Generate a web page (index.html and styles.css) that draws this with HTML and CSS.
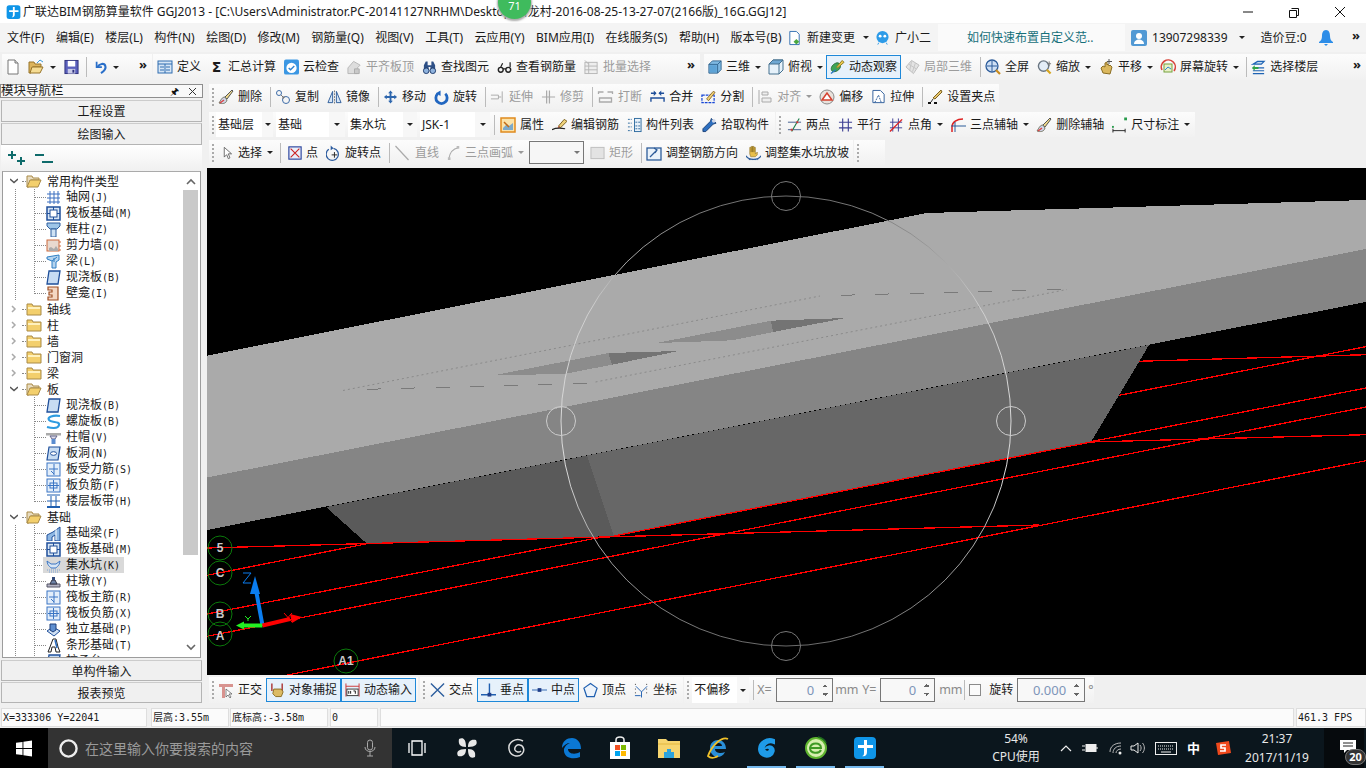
FILE: index.html
```html
<!DOCTYPE html>
<html lang="zh">
<head>
<meta charset="utf-8">
<title>广联达BIM钢筋算量软件 GGJ2013</title>
<link rel="stylesheet" href="styles.css">
</head>
<body>
<svg class="sprite" xmlns="http://www.w3.org/2000/svg">
<symbol id="new" viewBox="0 0 16 16"><path d="M3 1h7l3 3v11H3z" fill="#fff" stroke="#777"/><path d="M10 1v3h3" fill="#ddd" stroke="#777"/></symbol>
<symbol id="open" viewBox="0 0 16 16"><path d="M1 3h5l1 2h6v3H5l-2 6H1z" fill="#dcb45c" stroke="#97742a"/><path d="M4 8h11l-3 6H2z" fill="#f5dc93" stroke="#97742a"/><path d="M9 4l3-3 3 2" fill="none" stroke="#3a9ad9"/></symbol>
<symbol id="save" viewBox="0 0 16 16"><rect x="1" y="1" width="14" height="14" fill="#5b60bd" stroke="#2c2f7a"/><rect x="4" y="1.500" width="8" height="6" fill="#fff"/><rect x="4" y="10" width="8" height="5" fill="#c9cbe8"/><rect x="9" y="11" width="2" height="3" fill="#2c2f7a"/></symbol>
<symbol id="undo" viewBox="0 0 16 16"><path d="M3 2v6h6" fill="none" stroke="#2a6fc9" stroke-width="2"/><path d="M4 8c2-4 8-5 9-1 1 3-2 6-5 8" fill="none" stroke="#2a6fc9" stroke-width="2.400"/></symbol>
<symbol id="def" viewBox="0 0 16 16"><rect x="1" y="2" width="14" height="12" fill="#d6e6f6" stroke="#2f6db0"/><path d="M1 5h14M3 8h4M3 11h4M9 8h4M9 11h4M8 5v9" stroke="#2f6db0" fill="none"/></symbol>
<symbol id="cloud" viewBox="0 0 16 16"><rect x="0" y="0" width="16" height="16" rx="2" fill="#3b97e3"/><circle cx="8" cy="9" r="5.500" fill="#fff"/><path d="M5 9l2 2 4-4" fill="none" stroke="#2f84d0" stroke-width="1.500"/></symbol>
<symbol id="flat" viewBox="0 0 16 16"><path d="M1 15V9l6-7 7 4-3 3v6z" fill="#ddd" stroke="#b5b5b5"/><path d="M8 10h5v5H8z" fill="#c9c9c9" stroke="#aaa"/></symbol>
<symbol id="find" viewBox="0 0 16 16"><path d="M2 6l2-4h2v4h4V2h2l2 4v6H9V8H7v4H2z" fill="#2d4f86"/><circle cx="4.500" cy="12" r="3" fill="#8fb3de" stroke="#1f3b6b"/><circle cx="11.500" cy="12" r="3" fill="#8fb3de" stroke="#1f3b6b"/></symbol>
<symbol id="glass" viewBox="0 0 16 16"><circle cx="4" cy="11" r="2.600" fill="none" stroke="#222" stroke-width="1.500"/><circle cx="12" cy="11" r="2.600" fill="none" stroke="#222" stroke-width="1.500"/><path d="M6.500 10h3M4 8l2-4M14 8V3" fill="none" stroke="#222" stroke-width="1.300"/></symbol>
<symbol id="batch" viewBox="0 0 16 16"><rect x="1" y="3" width="13" height="12" fill="#eee" stroke="#b5b5b5"/><path d="M1 7h13M1 11h13M5 3v12M1 1l4 4" stroke="#b5b5b5" fill="none"/></symbol>
<symbol id="cube" viewBox="0 0 16 16"><path d="M1 5l4-4h10v10l-4 4H1z" fill="#7fb9e2" stroke="#2a5f8a"/><path d="M1 5h10v10M11 5l4-4" fill="none" stroke="#2a5f8a"/><path d="M2 6h8v8H2z" fill="#5da3d6"/></symbol>
<symbol id="top" viewBox="0 0 16 16"><path d="M1 5l4-4h10v10l-4 4H1z" fill="#e5f1fa" stroke="#44708f"/><path d="M1 5l4-4h10l-4 4z" fill="#6ea8d4" stroke="#44708f"/><path d="M11 5v10M11 5l4-4" fill="none" stroke="#44708f"/></symbol>
<symbol id="orbit" viewBox="0 0 16 16"><path d="M6 4c4-2 7 3 4 6-2 3-7 4-8 2-2-3 1-7 4-8z" fill="#3ea457" stroke="#256b38"/><path d="M7 8l6-7 2 2-7 6z" fill="#e9c94e" stroke="#8d7a22"/><path d="M1 15l5-4" stroke="#2b78c4" stroke-width="1.500"/></symbol>
<symbol id="local" viewBox="0 0 16 16"><path d="M1 8l6-7 8 5-6 9z" fill="#e3e3e3" stroke="#bbb"/><path d="M4 5l8 5M7 2l-2 10M11 4l-3 9" stroke="#c4c4c4" fill="none"/></symbol>
<symbol id="full" viewBox="0 0 16 16"><circle cx="7" cy="7" r="6" fill="#cfe0f5" stroke="#2d5c9a" stroke-width="1.300"/><path d="M7 2v10M2 7h10" stroke="#2d5c9a"/><path d="M11 11l4 4" stroke="#c88b1e" stroke-width="2.200"/></symbol>
<symbol id="zoomi" viewBox="0 0 16 16"><circle cx="7" cy="7" r="5.500" fill="#e4edf7" stroke="#6a7682" stroke-width="1.500"/><path d="M10.500 11l4 4" stroke="#d6a51f" stroke-width="2.400"/><path d="M13 2v5M11 4.500h4" stroke="#777" fill="none"/></symbol>
<symbol id="pan" viewBox="0 0 16 16"><path d="M3 9l2 5 7 1 2-7-2-2-1 1-1-2-1 1V3L7 4v4L5 7z" fill="#dbb85e" stroke="#8a6d22"/><path d="M11 0v5M9 2.500h5" stroke="#555" fill="none"/></symbol>
<symbol id="rot" viewBox="0 0 16 16"><path d="M2 11A7 7 0 1 1 14 12" fill="none" stroke="#d8453b" stroke-width="1.600"/><rect x="4" y="5" width="8" height="8" fill="#e9f0c8" stroke="#74a23c"/><path d="M5 11l3-3 3 2" stroke="#2d86d6" fill="none"/></symbol>
<symbol id="floor" viewBox="0 0 16 16"><path d="M2 5l5-3h7l-3 3zM2 9h12M2 12h12M2 15h12" fill="#c5dcf1" stroke="#1f64b4" stroke-width="1.300"/><path d="M1 9l3-3v2h4v2H4v2z" fill="#2fa246"/></symbol>
<symbol id="del" viewBox="0 0 16 16"><path d="M14 1l1 1-6 8-2-2z" fill="#f0d98a" stroke="#555"/><path d="M7 8c-3 0-4 3-6 6 3 1 7 1 8-3z" fill="#cfd6ea" stroke="#776"/><path d="M2 14l4-3" stroke="#d44" stroke-width="1.500"/></symbol>
<symbol id="copy" viewBox="0 0 16 16"><circle cx="4" cy="4" r="2.500" fill="none" stroke="#3f6da8"/><circle cx="11" cy="11" r="3.500" fill="none" stroke="#3f6da8"/><path d="M6 6l3 3M9 7v2H7" stroke="#777" fill="none"/></symbol>
<symbol id="mirror" viewBox="0 0 16 16"><path d="M1 14L6 2v12zM15 14L10 2v12z" fill="#d8e6f5" stroke="#2d5c9a"/><path d="M8 1v14" stroke="#777" stroke-dasharray="2 1"/></symbol>
<symbol id="move" viewBox="0 0 16 16"><path d="M8 1l2.500 3H9v3h3V5.500L15 8l-3 2.500V9H9v3h1.500L8 15l-2.500-3H7V9H4v1.500L1 8l3-2.500V7h3V4H5.500z" fill="#2e66ad"/></symbol>
<symbol id="rotate" viewBox="0 0 16 16"><path d="M4 4.500a6 6 0 1 0 8 0" fill="none" stroke="#2166c0" stroke-width="3"/><path d="M7 1v6l-5-3z" fill="#2166c0"/></symbol>
<symbol id="ext" viewBox="0 0 16 16"><path d="M1 6h8v4H1M9 8h3M13 2v12" fill="none" stroke="#aaa"/></symbol>
<symbol id="trim" viewBox="0 0 16 16"><path d="M6 1v14M9 1v14M1 8h14" fill="none" stroke="#aaa" stroke-width="1.300"/></symbol>
<symbol id="brk" viewBox="0 0 16 16"><path d="M1 5V3h5M15 5V3h-5M2 9h12v4H2z" fill="none" stroke="#aaa" stroke-width="1.300"/></symbol>
<symbol id="merge" viewBox="0 0 16 16"><path d="M1 4h5M15 4h-5M1 13V9h14v4" fill="none" stroke="#1f4f9a" stroke-width="1.500"/><path d="M7 4L4 1v6zM9 4l3-3v6z" fill="#1f4f9a"/></symbol>
<symbol id="split" viewBox="0 0 16 16"><rect x="1" y="6" width="13" height="8" fill="none" stroke="#1646d6" stroke-width="1.300" stroke-dasharray="3 1"/><path d="M6 10l7-8 2 1-7 9z" fill="#efd27b" stroke="#8d6a22"/></symbol>
<symbol id="align" viewBox="0 0 16 16"><path d="M2 1v14M5 3h6v3H5zM5 9h9v4H5z" fill="#eee" stroke="#aaa"/></symbol>
<symbol id="offs" viewBox="0 0 16 16"><circle cx="8" cy="8" r="7" fill="#e9e2dc" stroke="#8a8a8a"/><path d="M3 11l5-7 5 7z" fill="#fff" stroke="#d4412f" stroke-width="1.500"/></symbol>
<symbol id="stretch" viewBox="0 0 16 16"><path d="M2 1h8l4 4v9H2z" fill="#fff" stroke="#2d5c9a"/><path d="M4 14l4-8 3 8" fill="none" stroke="#2d5c9a" stroke-dasharray="2 1"/></symbol>
<symbol id="grip" viewBox="0 0 16 16"><path d="M14 1l1 2-7 7-2-1z" fill="#e7c66d" stroke="#7d6220"/><path d="M1 14h3M7 14h3" stroke="#111" stroke-width="2"/><path d="M6 10l-2 3" stroke="#333"/></symbol>
<symbol id="prop" viewBox="0 0 16 16"><rect x="1" y="1" width="14" height="14" fill="#fbe2a8" stroke="#e08a1e" stroke-width="1.500"/><path d="M3 11l4-4 2 2 4-3v7H3z" fill="#7ca9c9"/><path d="M4 5l5 5" stroke="#c26a15" stroke-width="1.500"/></symbol>
<symbol id="edit" viewBox="0 0 16 16"><path d="M7 9l6-7 3 2-7 7z" fill="#efd27b" stroke="#7a5f1d"/><path d="M7 9l-1 2 3 0z" fill="#c42"/><path d="M0 13c4-2 8-2 14-1" fill="none" stroke="#222" stroke-width="1.300"/></symbol>
<symbol id="list" viewBox="0 0 16 16"><rect x="8" y="1" width="7" height="14" fill="#eaf2fa" stroke="#2d6a9e"/><path d="M1 2h4M1 6h4M1 10h4M1 14h4M9 5h5M9 9h5M9 12h5" stroke="#2d6a9e" stroke-dasharray="2 1" fill="none"/></symbol>
<symbol id="pick" viewBox="0 0 16 16"><path d="M10 1l5 5-3 1-8 8-3 0 0-3 8-8z" fill="#2d6fc0" stroke="#193f75"/><circle cx="12.500" cy="3.500" r="2" fill="#cfd6e6"/></symbol>
<symbol id="two" viewBox="0 0 16 16"><path d="M1 13h14M1 5h14" stroke="#3e5a8c" fill="none"/><path d="M5 15l8-14" stroke="#1d7d4a" stroke-width="1.200"/><path d="M4 13h2M10 5h2" stroke="#d33" stroke-width="2"/></symbol>
<symbol id="para" viewBox="0 0 16 16"><path d="M1 5h14M1 11h14M5 1v14M11 1v14" stroke="#3d3f93" stroke-width="1.200" fill="none"/></symbol>
<symbol id="angle" viewBox="0 0 16 16"><path d="M1 5h13M1 11h13M4 1v14M10 1v14" stroke="#3d3f93" fill="none"/><path d="M1 15L14 2" stroke="#d22" stroke-width="1.500"/></symbol>
<symbol id="arc3" viewBox="0 0 16 16"><path d="M2 15V10c0-5 5-8 11-8" fill="none" stroke="#d22" stroke-width="1.500"/><path d="M1 9h15M5 5v10" stroke="#2d5c9a" fill="none"/></symbol>
<symbol id="dim" viewBox="0 0 16 16"><rect x="0" y="9" width="2" height="2" fill="#2a9c4d"/><rect x="13" y="0" width="3" height="3" fill="#2a9c4d"/><path d="M1 12v4M14 12v4M1 14h13" stroke="#222" fill="none"/></symbol>
<symbol id="sel" viewBox="0 0 16 16"><path d="M4 1v12l3-3 2 5 2-1-2-5h4z" fill="#fff" stroke="#555"/></symbol>
<symbol id="pt" viewBox="0 0 16 16"><rect x="1" y="1" width="14" height="14" fill="#e9eefa" stroke="#27419c" stroke-width="1.300"/><path d="M3 3l10 10M13 3L3 13" stroke="#c22" stroke-width="1.300"/></symbol>
<symbol id="rotpt" viewBox="0 0 16 16"><path d="M3 4a6.500 6.500 0 1 0 5-1" fill="none" stroke="#2a5a9e" stroke-width="1.300"/><path d="M5 0l3 3-3 2z" fill="#2a5a9e"/><path d="M9 7v6M6 10h6" stroke="#222"/></symbol>
<symbol id="line" viewBox="0 0 16 16"><path d="M1 1l13 14" stroke="#aaa" stroke-width="1.200"/></symbol>
<symbol id="arc" viewBox="0 0 16 16"><path d="M2 15C3 8 7 3 13 2" fill="none" stroke="#aaa" stroke-width="1.300"/><rect x="11" y="0" width="3" height="3" fill="#bbb"/><rect x="1" y="13" width="3" height="3" fill="#bbb"/></symbol>
<symbol id="rect" viewBox="0 0 16 16"><rect x="1" y="2" width="14" height="12" fill="#e3e3e3" stroke="#bdbdbd"/></symbol>
<symbol id="adj" viewBox="0 0 16 16"><rect x="1" y="3" width="14" height="12" fill="#eaf2fa" stroke="#2d5c9a" stroke-width="1.300"/><path d="M4 12l7-7M8 3l3 2-2 3" fill="none" stroke="#2d5c9a" stroke-width="1.300"/></symbol>
<symbol id="adjp" viewBox="0 0 16 16"><path d="M4 9V2h1.500v5V1H7v6V1h1.500v6V2H10v7l2-2v3l-2 2H5z" fill="#e8bf4a" stroke="#8a6d22" stroke-width=".6"/><path d="M0 11c3 5 13 5 16 0" fill="none" stroke="#2d5c9a" stroke-width="1.300"/><path d="M3 15h10" stroke="#2d5c9a" stroke-dasharray="2 1"/></symbol>
<symbol id="ortho" viewBox="0 0 16 16"><path d="M1 2h14v3H7v11H4V5H1z" fill="#d8938f"/><path d="M8 7v8l2-2 2 3 1-1-2-3h3z" fill="#fff" stroke="#555" stroke-width=".7"/></symbol>
<symbol id="snap" viewBox="0 0 16 16"><path d="M2 1v8M13 1v8" stroke="#a33" stroke-width="1.500"/><path d="M4 7h8l2 3-2 5H6l-3-3z" fill="#dcbb64" stroke="#8a6d22"/></symbol>
<symbol id="dyn" viewBox="0 0 16 16"><path d="M1 1v14M15 1v14M1 4h14" stroke="#c33" fill="none"/><rect x="2" y="7" width="12" height="7" fill="#fff" stroke="#333"/><path d="M4 9v3M6 9v3M9 9h2v3" stroke="#111" fill="none"/></symbol>
<symbol id="cross" viewBox="0 0 16 16"><path d="M1 1l14 14M15 1L1 15" stroke="#2e5f9e" stroke-width="1.500"/></symbol>
<symbol id="perp" viewBox="0 0 16 16"><path d="M9 1v12M0 13h16" stroke="#1f5fb0" stroke-width="1.500"/><rect x="7" y="11" width="4" height="4" fill="#1f3f8a"/></symbol>
<symbol id="mid" viewBox="0 0 16 16"><path d="M0 8h16" stroke="#6a93c9" stroke-width="1.500"/><rect x="6" y="6" width="4" height="4" fill="#1f3f8a"/></symbol>
<symbol id="vert" viewBox="0 0 16 16"><path d="M8 1l7 5-3 9H4L1 6z" fill="#eef4fb" stroke="#1f5fb0" stroke-width="1.300"/></symbol>
<symbol id="coord" viewBox="0 0 16 16"><path d="M2 4l6 6v6M14 4l-6 6M1 14h6" stroke="#1f5fb0" fill="none"/><path d="M1 2h2M13 2h2M1 7h2M13 7h2M1 11h1M13 11h2" stroke="#333" stroke-dasharray="1 1"/></symbol>
<symbol id="plus" viewBox="0 0 22 16"><path d="M5 1v8M1 5h8M14 7v8M10 11h8" stroke="#0f6b6b" stroke-width="2"/></symbol>
<symbol id="minus" viewBox="0 0 22 16"><path d="M1 5h9M8 12h11" stroke="#0f6b6b" stroke-width="2"/></symbol>
<symbol id="chr" viewBox="0 0 8 8"><path d="M2 1l3 3-3 3" fill="none" stroke="#aaa" stroke-width="1.500"/></symbol>
<symbol id="chd" viewBox="0 0 8 8"><path d="M0 2l4 3.500L8 2" fill="none" stroke="#555" stroke-width="1.500"/></symbol>
<symbol id="fc" viewBox="0 0 16 14"><path d="M1 2h5l1 2h8v9H1z" fill="#f3cf6c" stroke="#a98a47"/><path d="M2 5h12v2H2z" fill="#fff1bd"/></symbol>
<symbol id="fo" viewBox="0 0 16 14"><path d="M1 2h5l1 2h6v2H5l-2 7H1z" fill="#e8dcc0" stroke="#a98a47"/><path d="M4 6h11l-3 7H1z" fill="#f3cf6c" stroke="#a98a47"/></symbol>
<symbol id="t-grid" viewBox="0 0 15 15"><path d="M4 1v13M8 1v13M12 1v13M1 4h13M1 8h13M1 12h13" stroke="#3a6fbf" fill="none"/></symbol>
<symbol id="t-raft" viewBox="0 0 15 15"><rect x="1" y="1" width="13" height="13" fill="#d8e6f5" stroke="#1f4f9a" stroke-width="1.500"/><rect x="4" y="4" width="7" height="7" fill="#fff" stroke="#1f4f9a"/><path d="M1 7.500h3M11 7.500h3M7.500 1v3M7.500 11v3" stroke="#1f4f9a"/></symbol>
<symbol id="t-col" viewBox="0 0 15 15"><path d="M1 1h13v3l-3 3v0H4L1 4z" fill="#9ec5e8" stroke="#2f5f9e"/><path d="M5 7h5v8H5z" fill="#cfe2f4" stroke="#2f5f9e"/></symbol>
<symbol id="t-wall" viewBox="0 0 15 15"><rect x="1" y="2" width="12" height="11" fill="#e8d9cf" stroke="#cc6a3e"/><path d="M3 10l2-1 3 2 2-3 2 3v2H3z" fill="#aaa"/><path d="M13 4h2M13 8h2M13 12h2" stroke="#cc6a3e"/></symbol>
<symbol id="t-beam" viewBox="0 0 15 15"><path d="M1 3l12-2v5l-3 2v6H6V7L1 5z" fill="#b5d4ef" stroke="#2f7fc4"/><path d="M6 7l5-4M8 8V4" stroke="#2f7fc4" fill="none"/></symbol>
<symbol id="t-slab" viewBox="0 0 15 15"><path d="M3 1h11l-2 13H1z" fill="#c7dcf3" stroke="#1f4f9a" stroke-width="1.300"/></symbol>
<symbol id="t-niche" viewBox="0 0 15 15"><path d="M2 1h10v13H2v-3h4V9H3V6h3V4H2z" fill="#f4d7c2" stroke="#9e4f23" stroke-width="1.200"/></symbol>
<symbol id="t-spiral" viewBox="0 0 15 15"><path d="M14 2C7 1 1 3 3 6s11 1 10 5-8 3-12 2" fill="none" stroke="#2e9be0" stroke-width="2.200"/></symbol>
<symbol id="t-cap" viewBox="0 0 15 15"><rect x="0" y="3" width="15" height="2.500" fill="#aaa"/><path d="M4 6h7l-2 3H6z" fill="#dde" stroke="#668"/><rect x="5.500" y="9" width="4" height="5" fill="#5a8cd0"/></symbol>
<symbol id="t-hole" viewBox="0 0 15 15"><path d="M3 1h11l-2 13H1z" fill="#c7dcf3" stroke="#1f4f9a" stroke-width="1.200"/><ellipse cx="7.500" cy="7.500" rx="3" ry="1.800" fill="#fff" stroke="#1f4f9a"/></symbol>
<symbol id="t-rein" viewBox="0 0 15 15"><rect x="1" y="1" width="13" height="13" fill="#e3eefa" stroke="#3a75c4"/><path d="M8 2v11M3 7h9M5 9l3 3" stroke="#3a75c4" fill="none"/></symbol>
<symbol id="t-neg" viewBox="0 0 15 15"><rect x="1" y="1" width="13" height="13" fill="#e3eefa" stroke="#3a75c4"/><rect x="4" y="5" width="7" height="5" fill="none" stroke="#3a75c4"/><path d="M7.500 2v11M2 7.500h11" stroke="#3a75c4"/></symbol>
<symbol id="t-band" viewBox="0 0 15 15"><path d="M1 1h13M1 13h13M5 2v10M10 2v10M1 7h13" stroke="#1f5fb0" fill="none"/><rect x="1" y="12" width="13" height="2" fill="#1f5fb0"/></symbol>
<symbol id="t-fbeam" viewBox="0 0 15 15"><path d="M1 15V9l6-3 7-5v14H9V9l-3 2v4z" fill="#8fb8e4" stroke="#1f4f9a"/><path d="M10 3v11" stroke="#fff"/></symbol>
<symbol id="t-pit" viewBox="0 0 15 15"><path d="M1 3c1 6 3 5 4 7h5c1-2 3-1 4-7l-4 3H5z" fill="#d8e6f5" stroke="#3a75c4"/><path d="M1 12h13M3 14h9" stroke="#7aa2d4" stroke-dasharray="1 1"/></symbol>
<symbol id="t-pier" viewBox="0 0 15 15"><path d="M1 10h13v3H1z" fill="#b5b5c5" stroke="#556"/><path d="M4 10l2-4h3l2 4z" fill="#6d82a5" stroke="#334"/><rect x="6" y="3" width="3" height="3" fill="#334a7a"/></symbol>
<symbol id="t-ind" viewBox="0 0 15 15"><path d="M1 9l6-4 7 4-6 5z" fill="#cfe0f4" stroke="#1f4f9a"/><path d="M4 8V2h6v6l-3 2z" fill="#5f8fd0" stroke="#1f3f7a"/></symbol>
<symbol id="t-strip" viewBox="0 0 15 15"><path d="M2 14l2-5 3-8h3l2 8 2 5H10L9 9H6l-1 5z" fill="#fff" stroke="#222"/><path d="M9 2l2 8" stroke="#2f6fc0" stroke-width="1.500"/></symbol>
<symbol id="win" viewBox="0 0 16 16"><path d="M0 2.300l6.500-.9v6.100H0zM7.400 1.300L16 0v7.500H7.400zM0 8.400h6.500v6.200L0 13.700zM7.400 8.400H16V16l-8.600-1.200z" fill="#fff"/></symbol>
<symbol id="fan" viewBox="0 0 22 22"><path d="M10 10C4 10 2 7 3 2c4-2 7 0 7 8zM12 10c0-6 3-8 8-7 2 4 0 7-8 7zM12 12c6 0 8 3 7 8-4 2-7 0-7-8zM10 12c0 6-3 8-8 7-2-4 0-7 8-7z" fill="#e8e8e8"/></symbol>
<symbol id="edge" viewBox="0 0 22 22"><path d="M2 11C2 4 7 1 12 1c5 0 9 4 9 11H8c0 5 7 6 12 3v5c-7 3-17 1-16-8 1-3 3-5 6-6-3 0-6 2-8 5z" fill="#0b78d4"/></symbol>
<symbol id="store" viewBox="0 0 22 24"><path d="M7 6V4c0-4 8-4 8 0v2" fill="none" stroke="#eee" stroke-width="1.500"/><rect x="1" y="6" width="20" height="17" fill="#fff"/><rect x="6" y="9" width="5" height="5" fill="#f25022"/><rect x="12" y="9" width="5" height="5" fill="#7fba00"/><rect x="6" y="15" width="5" height="5" fill="#00a4ef"/><rect x="12" y="15" width="5" height="5" fill="#ffb900"/></symbol>
<symbol id="folder" viewBox="0 0 22 22"><path d="M0 2h8l2 2h12v17H0z" fill="#f6d56f"/><path d="M0 7h22" stroke="#e2b73f"/><path d="M6 21v-6h3v-3h4v3h3v6z" fill="#2da3dc"/></symbol>
<symbol id="ie" viewBox="0 0 24 24"><path d="M4 12c0-5 4-8 8-8s8 3 8 9H9c0 4 6 5 10 3-2 5-8 6-11 4-3-2-4-5-4-8z" fill="#2a8fd8"/><path d="M9 10h7c0-4-7-4-7 0z" fill="#0b1219"/><path d="M22 3C16 0 6 9 2 20c4 4 10 0 10 0" fill="none" stroke="#f0c12a" stroke-width="1.800"/></symbol>
<symbol id="gld" viewBox="0 0 24 24"><path d="M19 4C12 1 4 6 4 13c0 6 6 9 11 7 4-2 5-7 2-9-2-1-5-1-6 1 3-1 5 1 3 3-3 2-6-1-5-4 1-4 6-6 10-4z" fill="#1f9be8" stroke="#1f9be8" stroke-width="2"/></symbol>
<symbol id="green" viewBox="0 0 24 24"><circle cx="12" cy="12" r="10" fill="#d8efb0" stroke="#5fb52f" stroke-width="2"/><path d="M6 12h11c0-6-10-6-11 0 0 6 9 6 11 2" fill="none" stroke="#3f9a24" stroke-width="2"/><path d="M14 1c4 1 7 3 8 6" stroke="#1f6d1f" stroke-width="1.500" fill="none"/></symbol>
<symbol id="blue" viewBox="0 0 24 24"><rect x="1" y="1" width="22" height="22" rx="4" fill="#0f95e8"/><path d="M11 4h3v5h6v3h-6v4c0 4-3 5-5 4 2 0 2-2 2-4v-4H5V9h6z" fill="#fff"/></symbol>
</svg>

<header class="titlebar">
  <svg class="app-ic" viewBox="0 0 24 24"><use href="#blue"/></svg>
  <span class="title-text">广联达BIM钢筋算量软件 GGJ2013 - [C:\Users\Administrator.PC-20141127NRHM\Desktop\白龙村-2016-08-25-13-27-07(2166版)_16G.GGJ12]</span>
  <div class="badge">71</div>
  <div class="winbtns">
    <svg viewBox="0 0 12 12"><path d="M1 6h10" stroke="#111"/></svg>
    <svg viewBox="0 0 12 12"><path d="M3.500 2.500h7v7h-2M1.500 4.500h7v7h-7z" fill="none" stroke="#111"/></svg>
    <svg viewBox="0 0 12 12"><path d="M1 1l10 10M11 1L1 11" stroke="#111"/></svg>
  </div>
</header>

<nav class="menubar">
  <div class="menus"><span>文件(F)</span><span>编辑(E)</span><span>楼层(L)</span><span>构件(N)</span><span>绘图(D)</span><span>修改(M)</span><span>钢筋量(Q)</span><span>视图(V)</span><span>工具(T)</span><span>云应用(Y)</span><span>BIM应用(I)</span><span>在线服务(S)</span><span>帮助(H)</span><span>版本号(B)</span></div>
  <div class="m-new"><svg class="ic w15" viewBox="0 0 16 16"><path d="M3 1h7l3 3v11H3z" fill="#fff" stroke="#2f6db0"/><path d="M10 9l3 3-3 3-3-3z" fill="#4aa83f"/></svg><span>新建变更</span><i class="caret"></i></div>
  <div class="m-guang"><svg class="ic w15" viewBox="0 0 16 16"><circle cx="8" cy="7" r="6.500" fill="#2d9be8"/><circle cx="5.500" cy="6" r="1.500" fill="#fff"/><circle cx="10.500" cy="6" r="1.500" fill="#fff"/><path d="M4 10c2 2 6 2 8 0M4 13l-1 2M12 13l1 2" stroke="#2d9be8" fill="none"/></svg><span>广小二</span></div>
  <div class="m-news">如何快速布置自定义范..</div>
  <div class="m-user"><svg class="ic w16" viewBox="0 0 16 16"><rect width="16" height="16" rx="2" fill="#5199d4"/><circle cx="8" cy="6" r="3" fill="#fff"/><path d="M3 14c0-6 10-6 10 0z" fill="#fff"/></svg><span>13907298339</span><i class="caret"></i><span class="bean">造价豆:0</span><svg class="ic w14" viewBox="0 0 14 16"><path d="M7 0c3 0 4 3 4 6s1 5 3 6v1H0v-1c2-1 3-3 3-6s1-6 4-6z" fill="#2d8de8"/><path d="M5 14h4l-2 2z" fill="#2d8de8"/></svg></div>
  <span class="more m-more">»</span>
</nav>

<div class="row1">
  <div class="band b1">
    <div class="tool only"><svg class="ic w16"><use href="#new"/></svg></div>
    <div class="tool only pr6"><svg class="ic w18"><use href="#open"/></svg><i class="caret"></i></div>
    <div class="tool only"><svg class="ic w15"><use href="#save"/></svg></div>
    <i class="sep"></i>
    <div class="tool only pl7"><svg class="ic w14"><use href="#undo"/></svg><i class="caret"></i></div>
    <span class="more b1-more">»</span>
  </div>
  <div class="band b2">
    <div class="tool"><svg class="ic w16"><use href="#def"/></svg><span>定义</span></div>
    <div class="tool"><b class="sigma">Σ</b><span>汇总计算</span></div>
    <div class="tool"><svg class="ic w15"><use href="#cloud"/></svg><span>云检查</span></div>
    <div class="tool off"><svg class="ic w15"><use href="#flat"/></svg><span>平齐板顶</span></div>
    <div class="tool"><svg class="ic w15"><use href="#find"/></svg><span>查找图元</span></div>
    <div class="tool"><svg class="ic w15"><use href="#glass"/></svg><span>查看钢筋量</span></div>
    <div class="tool off"><svg class="ic w15"><use href="#batch"/></svg><span>批量选择</span></div>
    <span class="more b2-more">»</span>
  </div>
  <div class="band b3">
    <div class="tool"><svg class="ic w14"><use href="#cube"/></svg><span>三维</span><i class="caret"></i></div>
    <div class="tool"><svg class="ic w16"><use href="#top"/></svg><span>俯视</span><i class="caret"></i></div>
    <div class="tool hl"><svg class="ic w15"><use href="#orbit"/></svg><span>动态观察</span></div>
    <div class="tool off"><svg class="ic w15"><use href="#local"/></svg><span>局部三维</span></div>
    <i class="sep"></i>
    <div class="tool"><svg class="ic w16"><use href="#full"/></svg><span>全屏</span></div>
    <div class="tool"><svg class="ic w15"><use href="#zoomi"/></svg><span>缩放</span><i class="caret"></i></div>
    <div class="tool"><svg class="ic w16"><use href="#pan"/></svg><span>平移</span><i class="caret"></i></div>
    <div class="tool"><svg class="ic w16"><use href="#rot"/></svg><span>屏幕旋转</span><i class="caret"></i></div>
    <i class="sep"></i>
    <div class="tool"><svg class="ic w15"><use href="#floor"/></svg><span>选择楼层</span></div>
    <span class="more b3-more">»</span>
  </div>
</div>

<main class="main">
  <aside class="sidebar">
    <div class="nav-head"><span>模块导航栏</span><span class="pin">🖈</span><svg class="nav-x" viewBox="0 0 9 9"><path d="M1 1l7 7M8 1L1 8" stroke="#333"/></svg></div>
    <div class="nav-btn first">工程设置</div>
    <div class="nav-btn">绘图输入</div>
    <div class="tree-tools"><svg class="tt"><use href="#plus"/></svg><svg class="tt"><use href="#minus"/></svg></div>
    <div class="tree-box">
      <div class="tree">
        <div class="node"><svg class="chev"><use href="#chd"/></svg><i class="d"></i><svg class="fold"><use href="#fo"/></svg><span>常用构件类型</span></div>
        <div class="leaf r"><i class="hook"></i><svg class="ti"><use href="#t-grid"/></svg><span>轴网<b>(J)</b></span></div>
        <div class="leaf r"><i class="hook"></i><svg class="ti"><use href="#t-raft"/></svg><span>筏板基础<b>(M)</b></span></div>
        <div class="leaf r"><i class="hook"></i><svg class="ti"><use href="#t-col"/></svg><span>框柱<b>(Z)</b></span></div>
        <div class="leaf r"><i class="hook"></i><svg class="ti"><use href="#t-wall"/></svg><span>剪力墙<b>(Q)</b></span></div>
        <div class="leaf r"><i class="hook"></i><svg class="ti"><use href="#t-beam"/></svg><span>梁<b>(L)</b></span></div>
        <div class="leaf r"><i class="hook"></i><svg class="ti"><use href="#t-slab"/></svg><span>现浇板<b>(B)</b></span></div>
        <div class="leaf r last"><i class="hook"></i><svg class="ti"><use href="#t-niche"/></svg><span>壁龛<b>(I)</b></span></div>
        <div class="node"><svg class="chev"><use href="#chr"/></svg><i class="d"></i><svg class="fold"><use href="#fc"/></svg><span>轴线</span></div>
        <div class="node"><svg class="chev"><use href="#chr"/></svg><i class="d"></i><svg class="fold"><use href="#fc"/></svg><span>柱</span></div>
        <div class="node"><svg class="chev"><use href="#chr"/></svg><i class="d"></i><svg class="fold"><use href="#fc"/></svg><span>墙</span></div>
        <div class="node"><svg class="chev"><use href="#chr"/></svg><i class="d"></i><svg class="fold"><use href="#fc"/></svg><span>门窗洞</span></div>
        <div class="node"><svg class="chev"><use href="#chr"/></svg><i class="d"></i><svg class="fold"><use href="#fc"/></svg><span>梁</span></div>
        <div class="node"><svg class="chev"><use href="#chd"/></svg><i class="d"></i><svg class="fold"><use href="#fo"/></svg><span>板</span></div>
        <div class="leaf"><i class="hook"></i><svg class="ti"><use href="#t-slab"/></svg><span>现浇板<b>(B)</b></span></div>
        <div class="leaf"><i class="hook"></i><svg class="ti"><use href="#t-spiral"/></svg><span>螺旋板<b>(B)</b></span></div>
        <div class="leaf"><i class="hook"></i><svg class="ti"><use href="#t-cap"/></svg><span>柱帽<b>(V)</b></span></div>
        <div class="leaf"><i class="hook"></i><svg class="ti"><use href="#t-hole"/></svg><span>板洞<b>(N)</b></span></div>
        <div class="leaf"><i class="hook"></i><svg class="ti"><use href="#t-rein"/></svg><span>板受力筋<b>(S)</b></span></div>
        <div class="leaf"><i class="hook"></i><svg class="ti"><use href="#t-neg"/></svg><span>板负筋<b>(F)</b></span></div>
        <div class="leaf last"><i class="hook"></i><svg class="ti"><use href="#t-band"/></svg><span>楼层板带<b>(H)</b></span></div>
        <div class="node"><svg class="chev"><use href="#chd"/></svg><i class="d"></i><svg class="fold"><use href="#fo"/></svg><span>基础</span></div>
        <div class="leaf r"><i class="hook"></i><svg class="ti"><use href="#t-fbeam"/></svg><span>基础梁<b>(F)</b></span></div>
        <div class="leaf r"><i class="hook"></i><svg class="ti"><use href="#t-raft"/></svg><span>筏板基础<b>(M)</b></span></div>
        <div class="leaf r"><i class="hook"></i><div class="picked"><svg class="ti"><use href="#t-pit"/></svg><span>集水坑<b>(K)</b></span></div></div>
        <div class="leaf r"><i class="hook"></i><svg class="ti"><use href="#t-pier"/></svg><span>柱墩<b>(Y)</b></span></div>
        <div class="leaf r"><i class="hook"></i><svg class="ti"><use href="#t-rein"/></svg><span>筏板主筋<b>(R)</b></span></div>
        <div class="leaf r"><i class="hook"></i><svg class="ti"><use href="#t-neg"/></svg><span>筏板负筋<b>(X)</b></span></div>
        <div class="leaf r"><i class="hook"></i><svg class="ti"><use href="#t-ind"/></svg><span>独立基础<b>(P)</b></span></div>
        <div class="leaf r"><i class="hook"></i><svg class="ti"><use href="#t-strip"/></svg><span>条形基础<b>(T)</b></span></div>
        <div class="leaf r"><i class="hook"></i><svg class="ti"><use href="#t-slab"/></svg><span>桩承台<b>(V)</b></span></div>
      </div>
      <div class="tree-scroll">
        <svg class="sb-arrow" viewBox="0 0 10 8"><path d="M1 6l4-4 4 4" fill="none" stroke="#666" stroke-width="1.600"/></svg>
        <div class="sb-thumb"></div>
        <svg class="sb-arrow down" viewBox="0 0 10 8"><path d="M1 2l4 4 4-4" fill="none" stroke="#666" stroke-width="1.600"/></svg>
      </div>
    </div>
    <div class="nav-btn tail">单构件输入</div>
    <div class="nav-btn tail2">报表预览</div>
  </aside>

  <section class="work">
    <div class="wrow r2">
      <div class="band">
        <i class="grip mrn1"></i>
        <div class="tool"><svg class="ic w16"><use href="#del"/></svg><span>删除</span></div>
        <i class="sep"></i>
        <div class="tool"><svg class="ic w16"><use href="#copy"/></svg><span>复制</span></div>
        <div class="tool"><svg class="ic w15"><use href="#mirror"/></svg><span>镜像</span></div>
        <i class="sep"></i>
        <div class="tool"><svg class="ic w15"><use href="#move"/></svg><span>移动</span></div>
        <div class="tool"><svg class="ic w15"><use href="#rotate"/></svg><span>旋转</span></div>
        <i class="sep"></i>
        <div class="tool off"><svg class="ic w15"><use href="#ext"/></svg><span>延伸</span></div>
        <div class="tool off"><svg class="ic w15"><use href="#trim"/></svg><span>修剪</span></div>
        <i class="sep"></i>
        <div class="tool off"><svg class="ic w17"><use href="#brk"/></svg><span>打断</span></div>
        <div class="tool"><svg class="ic w15"><use href="#merge"/></svg><span>合并</span></div>
        <div class="tool"><svg class="ic w15"><use href="#split"/></svg><span>分割</span></div>
        <i class="sep"></i>
        <div class="tool off"><svg class="ic w16"><use href="#align"/></svg><span>对齐</span><i class="caret"></i></div>
        <div class="tool"><svg class="ic w16"><use href="#offs"/></svg><span>偏移</span></div>
        <div class="tool"><svg class="ic w15"><use href="#stretch"/></svg><span>拉伸</span></div>
        <i class="sep"></i>
        <div class="tool"><svg class="ic w16"><use href="#grip"/></svg><span>设置夹点</span></div>
      </div>
    </div>
    <div class="wrow r3">
      <div class="band pr2">
        <i class="grip mr1"></i>
        <div class="combo c1"><span>基础层</span><i class="caret"></i></div>
        <div class="combo c2"><span>基础</span><i class="caret"></i></div>
        <div class="combo c3"><span>集水坑</span><i class="caret"></i></div>
        <div class="combo c4"><span>JSK-1</span><i class="caret"></i></div>
        <i class="sep mr1"></i>
        <div class="tool"><svg class="ic w16"><use href="#prop"/></svg><span>属性</span></div>
        <div class="tool"><svg class="ic w15"><use href="#edit"/></svg><span>编辑钢筋</span></div>
        <div class="tool"><svg class="ic w15"><use href="#list"/></svg><span>构件列表</span></div>
        <div class="tool"><svg class="ic w15"><use href="#pick"/></svg><span>拾取构件</span></div>
      </div>
      <div class="band pr2 ml1">
        <i class="grip mr1"></i>
        <div class="tool"><svg class="ic w15"><use href="#two"/></svg><span>两点</span></div>
        <div class="tool"><svg class="ic w15"><use href="#para"/></svg><span>平行</span></div>
        <div class="tool"><svg class="ic w15"><use href="#angle"/></svg><span>点角</span><i class="caret"></i></div>
        <div class="tool"><svg class="ic w16"><use href="#arc3"/></svg><span>三点辅轴</span><i class="caret"></i></div>
        <div class="tool"><svg class="ic w16"><use href="#del"/></svg><span>删除辅轴</span></div>
        <div class="tool"><svg class="ic w15"><use href="#dim"/></svg><span>尺寸标注</span><i class="caret"></i></div>
      </div>
    </div>
    <div class="wrow r4">
      <div class="band">
        <i class="grip mr2"></i>
        <div class="tool"><svg class="ic w13"><use href="#sel"/></svg><span>选择</span><i class="caret"></i></div>
        <i class="sep mr3"></i>
        <div class="tool"><svg class="ic w14"><use href="#pt"/></svg><span>点</span></div>
        <div class="tool"><svg class="ic w15"><use href="#rotpt"/></svg><span>旋转点</span></div>
        <i class="sep"></i>
        <div class="tool off"><svg class="ic w17"><use href="#line"/></svg><span>直线</span></div>
        <div class="tool off"><svg class="ic w14"><use href="#arc"/></svg><span>三点画弧</span><i class="caret"></i></div>
        <div class="select"><i class="caret"></i></div>
        <div class="tool off"><svg class="ic w15"><use href="#rect"/></svg><span>矩形</span></div>
        <i class="sep"></i>
        <div class="tool"><svg class="ic w16"><use href="#adj"/></svg><span>调整钢筋方向</span></div>
        <div class="tool"><svg class="ic w15"><use href="#adjp"/></svg><span>调整集水坑放坡</span></div>
      </div>
      <div class="band ml1 b-end"><i class="grip"></i></div>
    </div>

    <svg class="canvas" viewBox="207 168 1159 507" xmlns="http://www.w3.org/2000/svg">
      <defs>
        <linearGradient id="ring" gradientUnits="userSpaceOnUse" x1="0" y1="196" x2="0" y2="646">
          <stop offset="0" stop-color="#6e6e6e"/><stop offset=".25" stop-color="#cfcfcf"/><stop offset=".6" stop-color="#dcdcdc"/><stop offset="1" stop-color="#6a6a6a"/>
        </linearGradient>
      </defs>
      <rect x="207" y="168" width="1159" height="507" fill="#000"/>
      <g stroke="#f00" stroke-width="1.300" shape-rendering="crispEdges">
        <path d="M207 575.300L1366 346.600M207 614L1366 388M207 636.300L1366 407M207 691L1366 460.700M1138 361.300L1366 354.700M1090 442L1366 434.700"/>
      </g>
      <g shape-rendering="crispEdges">
        <path d="M207 355.700L787 240.700 927 213 1366 200V249L207 477.500z" fill="#aaa"/>
        <path d="M207 477.500L1366 249V302L207 530z" fill="#858585"/>
        <path d="M326 507L587 455.500 614 536 367 543.700z" fill="#5a5a5a"/>
        <path d="M587 455.500L1149 345 1091 442 614 536z" fill="#676767"/>
        <path d="M493.700 375.300L608.400 353 612 364.700 565.900 373.700 528.900 374.700z" fill="#8c8c8c"/>
        <path d="M608.400 353L678.700 351 612 364.700z" fill="#747474"/>
        <path d="M656.500 343L771 320.700 773 332 732 340.300 688 342z" fill="#8c8c8c"/>
        <path d="M771 320.700L846 318 773 332z" fill="#747474"/>
      </g>
      <g fill="none" stroke="#8a8a8a">
        <path d="M343 390.500L820 296M595.500 382L1067 289.500" stroke-dasharray="2 3"/>
        <path d="M367 389.300L587 383.300M841 295.300L1061 289.300" stroke="#7a7a7a" stroke-dasharray="14 20.300" shape-rendering="crispEdges"/>
      </g>
      <path d="M207 548L1038.600 525M614 536L1091 442" stroke="#f00" stroke-width="1.300" fill="none" shape-rendering="crispEdges"/>
      <g fill="none" stroke="url(#ring)">
        <circle cx="786" cy="421" r="225"/>
      </g>
      <g fill="none">
        <circle cx="786" cy="196" r="14.500" stroke="#777"/>
        <circle cx="786" cy="646" r="14.500" stroke="#777"/>
        <circle cx="561" cy="421" r="14.500" stroke="#ccc"/>
        <circle cx="1011" cy="421" r="14.500" stroke="#ccc"/>
      </g>
      <g fill="none" stroke="#0b7a0b">
        <circle cx="220" cy="548" r="12"/><circle cx="220" cy="573" r="12"/><circle cx="220" cy="614" r="12"/><circle cx="220" cy="634" r="12"/><circle cx="346" cy="661" r="12"/>
      </g>
      <g class="axis-label">
        <text x="220" y="552">5</text><text x="220" y="577">C</text><text x="220" y="618">B</text><text x="220" y="640">A</text><text x="346" y="665">A1</text>
      </g>
      <path d="M262.500 625.500L256 590" stroke="#0a7df0" stroke-width="4"/>
      <path d="M255 576l-5 18h10z" fill="#0a7df0"/>
      <path d="M243 573h8l-8 10h8" stroke="#0a7df0" fill="none"/>
      <path d="M262.500 625.500H244" stroke="#22f022" stroke-width="4"/>
      <path d="M236 625.500l8-4v8z" fill="#22f022"/>
      <path d="M245 616l3 3 3-3M248 619v2" stroke="#22f022" fill="none"/>
      <path d="M262.500 625.500L290 619" stroke="#f00" stroke-width="4"/>
      <path d="M302 617l-12-3 2 9z" fill="#f00"/>
      <path d="M284 613l8 9M292 613l-8 9" stroke="#f00" fill="none"/>
    </svg>

    <div class="wrow bottom">
      <div class="band pr2">
        <i class="grip mrn1"></i>
        <div class="tool"><svg class="ic w16"><use href="#ortho"/></svg><span>正交</span></div>
        <div class="tool hl"><svg class="ic w15"><use href="#snap"/></svg><span>对象捕捉</span></div>
        <div class="tool hl"><svg class="ic w15"><use href="#dyn"/></svg><span>动态输入</span></div>
      </div>
      <div class="band pr2 ml2">
        <i class="grip"></i>
        <div class="tool"><svg class="ic w15"><use href="#cross"/></svg><span>交点</span></div>
        <div class="tool hl"><svg class="ic w15"><use href="#perp"/></svg><span>垂点</span></div>
        <div class="tool hl"><svg class="ic w15"><use href="#mid"/></svg><span>中点</span></div>
        <div class="tool"><svg class="ic w15"><use href="#vert"/></svg><span>顶点</span></div>
        <div class="tool"><svg class="ic w15"><use href="#coord"/></svg><span>坐标</span></div>
      </div>
      <div class="band ml1 b-offset">
        <i class="grip mr2"></i>
        <div class="combo c5"><span>不偏移</span><i class="caret"></i></div>
        <i class="sep"></i>
        <span class="lbl x">X=</span>
        <div class="spin s1"><span>0</span><i class="sp"></i></div>
        <span class="lbl mm1">mm</span>
        <span class="lbl y">Y=</span>
        <div class="spin s2"><span>0</span><i class="sp"></i></div>
        <span class="lbl mm2">mm</span>
        <i class="sep"></i>
        <i class="check"></i>
        <span class="rot-lbl">旋转</span>
        <div class="spin s3"><span>0.000</span><i class="sp"></i></div>
        <span class="lbl deg">°</span>
      </div>
    </div>
  </section>
</main>

<footer class="status">
  <div class="cell st1">X=333306 Y=22041</div>
  <div class="cell st2">层高:3.55m</div>
  <div class="cell st3">底标高:-3.58m</div>
  <div class="cell st4">0</div>
  <div class="cell st5"></div>
  <div class="cell st6">461.3 FPS</div>
</footer>

<div class="taskbar">
  <div class="start"><svg class="start-logo"><use href="#win"/></svg></div>
  <div class="search">
    <svg class="cortana" viewBox="0 0 20 20"><circle cx="10" cy="10" r="8.500" fill="none" stroke="#eee" stroke-width="2.500"/></svg>
    <span>在这里输入你要搜索的内容</span>
    <svg class="mic" viewBox="0 0 12 18"><rect x="3.500" y="1" width="5" height="10" rx="2.500" fill="none" stroke="#aaa"/><path d="M1 8c0 6 10 6 10 0M6 13v4M3 17h6" fill="none" stroke="#aaa"/></svg>
  </div>
  <div class="apps">
    <div class="app"><svg class="a20" viewBox="0 0 20 20"><path d="M5 3h10v14H5zM2 5v10M18 5v10" fill="none" stroke="#fff" stroke-width="1.300"/></svg></div>
    <div class="app"><svg class="a22"><use href="#fan"/></svg></div>
    <div class="app"><svg class="a22" viewBox="0 0 22 22"><path d="M17 4C10 0 2 5 3 12c1 7 9 9 13 5 3-3 2-8-2-9-3-1-6 2-5 5 1 2 4 3 6 1" fill="none" stroke="#ddd" stroke-width="1.500"/></svg></div>
    <div class="app first-b"><svg class="a22"><use href="#edge"/></svg></div>
    <div class="app nar"><svg class="a22 tall"><use href="#store"/></svg></div>
    <div class="app nar"><svg class="a22"><use href="#folder"/></svg></div>
    <div class="app nar"><svg class="a24"><use href="#ie"/></svg></div>
    <div class="app nar run"><svg class="a24"><use href="#gld"/></svg></div>
    <div class="app nar run"><svg class="a24"><use href="#green"/></svg></div>
    <div class="app nar run"><svg class="a24"><use href="#blue"/></svg></div>
  </div>
  <div class="cpu"><span>54%</span><span>CPU使用</span></div>
  <div class="tray">
    <svg class="t-up" viewBox="0 0 12 8"><path d="M1 7l5-5 5 5" fill="none" stroke="#eee" stroke-width="1.200"/></svg>
    <svg class="t-bat" viewBox="0 0 16 10"><rect x="4" y="1.500" width="10" height="7" fill="#eee" stroke="#eee"/><path d="M15 4v2M0 3h3M0 7h3" stroke="#eee" fill="none"/></svg>
    <svg class="t-wifi" viewBox="0 0 14 14"><path d="M1 11c0-6 5-9 11-9M4 12c0-4 3-7 8-7M7 12c0-2 2-4 5-4" fill="none" stroke="#bbb"/><circle cx="11" cy="12" r="1.500" fill="#eee"/></svg>
    <svg class="t-vol" viewBox="0 0 16 14"><path d="M1 5h3l4-3v10L4 9H1z" fill="none" stroke="#eee"/><path d="M10 4c1.500 2 1.500 4 0 6M12.500 2c2.500 3 2.500 7 0 10" fill="none" stroke="#bbb"/></svg>
    <svg class="t-kb" viewBox="0 0 22 13"><rect x=".5" y=".5" width="21" height="12" fill="none" stroke="#eee"/><path d="M3 4h16M3 7h16" stroke="#eee" stroke-dasharray="1 1"/><path d="M6 10h10" stroke="#eee"/></svg>
    <span class="t-zh">中</span>
    <svg class="t-s" viewBox="0 0 16 16"><path d="M1 3l13-2 2 12-13 2z" fill="#f0491c"/><path d="M11 5H6v3h4v3H5" fill="none" stroke="#fff" stroke-width="1.700"/></svg>
    <div class="clock"><span>21:37</span><span>2017/11/19</span></div>
    <div class="notif">
      <svg class="n-ic" viewBox="0 0 16 14"><path d="M0 0h16v10H7l-3 3v-3H0z" fill="#fff"/><path d="M3 3h10M3 6h10" stroke="#222"/></svg>
      <span class="n-count">20</span>
    </div>
  </div>
</div>
</body>
</html>
```
FILE: styles.css
```css
* { box-sizing: border-box; }
html, body { margin: 0; padding: 0; }
body {
  width: 1366px; height: 768px; overflow: hidden;
  display: flex; flex-direction: column;
  background: #f0f0f0; color: #1a1a1a;
  font: 12px/16px "Noto Sans", "Noto Sans CJK SC", sans-serif;
  position: relative;
}
.sprite { width: 0; height: 0; position: absolute; }
i { font-style: normal; display: block; flex: none; }
svg { display: block; flex: none; }

/* title */
.titlebar { height: 23px; background: #fff; display: flex; align-items: center; flex: none; position: relative; }
.app-ic { width: 15px; height: 16px; margin-left: 6px; margin-right: 2px; }
.title-text { white-space: nowrap; }
.badge {
  position: absolute; left: 498px; top: -14px; width: 33px; height: 33px; border-radius: 50%;
  background: #3fbb5d; box-shadow: 0 1px 2px 1px #aaa; color: #fff; font-size: 11px;
  display: flex; align-items: flex-end; justify-content: center; padding-bottom: 5px;
}
.winbtns { margin-left: auto; display: flex; gap: 34px; padding-right: 20px; }
.winbtns svg { width: 12px; height: 12px; }

/* menu */
.menubar { height: 29px; flex: none; display: flex; align-items: center; background: #f4f4f4; position: relative; }
.menus { display: flex; gap: 11.500px; padding-left: 7px; white-space: nowrap; width: 787px; }
.m-new, .m-guang, .m-user { display: flex; align-items: center; gap: 5px; }
.m-new .caret { margin-left: 3px; }
.m-guang { margin-left: 7px; }
.m-news { margin-left: 7px; width: 187px; height: 27px; line-height: 27px; background: #fafafa; padding-left: 29px; color: #17707a; white-space: nowrap; }
.m-user { margin-left: 6px; }
.m-user .caret { margin: 0 3px 0 6px; }
.bean { margin: 0 7px 0 8px; }
.more { font-size: 13px; font-weight: 700; line-height: 12px; }
.m-more { position: absolute; left: 1352px; top: 6px; }

/* rows & bands */
.row1 { height: 28px; flex: none; display: flex; padding: 2px 0 0 2px; }
.band {
  display: flex; align-items: center; height: 100%; flex: none;
  background: linear-gradient(#fcfcfc, #f1f1f1);
  position: relative;
}
.b1 { width: 150px; }
.b2 { width: 547px; margin-left: 1px; }
.b3 { margin-left: 4px; width: 662px; padding-left: 0; }
.b1-more { position: absolute; left: 137px; top: 4px; }
.b2-more { position: absolute; left: 534px; top: 4px; }
.b3-more { position: absolute; left: 649px; top: 4px; }

.tool { display: flex; align-items: center; gap: 4px; padding: 0 4px; height: 100%; white-space: nowrap; flex: none; }
.tool.only { padding: 0 3px; }
.tool.pr6 { padding-right: 6px; }
.tool.pl7 { padding-left: 7px; }
.tool.off { color: #9c9c9c; }
.tool.hl { border: 1px solid #1e88d8; background: #e6f1fb; padding: 0 3px; height: calc(100% - 2px); }
.caret { width: 0; height: 0; border: 3px solid transparent; border-top: 3px solid #222; border-bottom: 0; margin-left: 1px; margin-right: -1px; width: 6px; }
.off .caret { border-top-color: #999; }
.ic { height: 16px; }
.w13 { width: 13px; } .w14 { width: 14px; } .w15 { width: 15px; } .w16 { width: 16px; } .w17 { width: 17px; } .w18 { width: 18px; }
.sigma { width: 15px; text-align: center; font-size: 14px; font-family: "DejaVu Sans", sans-serif; }
.sep { width: 5px; height: 20px; background: linear-gradient(#bbb, #bbb) right center / 1px 100% no-repeat; }
.grip { width: 4px; height: 18px; margin-left: 2px; background: repeating-linear-gradient(#aaa 0 2px, transparent 2px 4px) center / 2px 100% no-repeat; }
.mrn1 { margin-right: -1px; } .mr1 { margin-right: 1px; } .mr2 { margin-right: 2px; } .mr3 { margin-right: 3px; }
.ml1 { margin-left: 1px; } .ml2 { margin-left: 2px; }
.pr2 { padding-right: 2px; }

/* main */
.main { height: 626px; flex: none; display: flex; }
.sidebar { width: 207px; flex: none; padding-top: 4px; display: flex; flex-direction: column; }
.nav-head { width: 203px; height: 14px; border: 1px solid #8e8e8e; background: #f8f8f8; display: flex; align-items: center; line-height: 12px; font-size: 12.500px; white-space: nowrap; padding-right: 5px; }
.pin { margin-left: auto; width: 12px; font-size: 10px; color: #111; overflow: hidden; }
.nav-x { width: 9px; height: 9px; margin-left: 6px; }
.nav-btn { width: 201px; height: 22px; margin: 1px 0 0 1px; line-height: 22px; text-align: center; border: 1px solid #b4b4b4; border-top-color: #ccc; background: #f0f0f0; font-size: 12px; flex: none; }
.nav-btn.first { margin-top: 2px; }
.nav-btn.tail { margin-top: 2px; height: 21px; line-height: 21px; }
.nav-btn.tail2 { height: 21px; line-height: 21px; }
.tree-tools { width: 201px; height: 26px; margin-left: 1px; background: linear-gradient(#fff, #f0f0f0); display: flex; align-items: center; gap: 5px; padding-left: 6px; flex: none; }
.tt { width: 22px; height: 16px; }
.tree-box { width: 199px; height: 487px; margin-left: 2px; border: 1px solid #9c9c9c; border-top-color: #aaa; background: #fff; display: flex; overflow: hidden; flex: none; }
.tree { width: 180px; height: 485px; padding-top: 1px; overflow: hidden; flex: none; font-family: "Noto Sans CJK SC", sans-serif; }
.tree b { font: 400 10px/16px "DejaVu Sans Mono", monospace; }
.node { height: 16px; display: flex; align-items: center; padding-left: 7px; white-space: nowrap; }
.chev { width: 8px; height: 8px; }
.d { width: 4px; margin-left: 4px; border-top: 1px dotted #888; }
.fold { width: 16px; height: 14px; margin-right: 5px; }
.leaf {
  height: 16px; display: flex; align-items: center; padding-left: 31px; white-space: nowrap;
  background: repeating-linear-gradient(#888 0 1px, transparent 1px 2px) 31px 0 / 1px 100% no-repeat;
}
.leaf.r { background: repeating-linear-gradient(#888 0 1px, transparent 1px 2px) 31px 0 / 1px 100% no-repeat, repeating-linear-gradient(#888 0 1px, transparent 1px 2px) 12px 0 / 1px 100% no-repeat; }
.leaf.last { background-size: 1px 8px, 1px 100%; }
.hook { width: 12px; height: 1px; border-top: 1px dotted #888; flex: none; }
.ti { width: 15px; height: 15px; margin-right: 5px; }
.picked { display: flex; align-items: center; background: #d9d9d9; height: 16px; margin-left: -3px; padding: 0 4px 0 3px; }
.tree-scroll { width: 15px; margin-left: 0; display: flex; flex-direction: column; align-items: center; flex: none; }
.sb-arrow { width: 10px; height: 8px; margin-top: 6px; }
.sb-arrow.down { margin-top: auto; margin-bottom: 6px; }
.sb-thumb { width: 15px; height: 365px; margin-top: 4px; background: #c9c9c9; }

/* work area */
.work { width: 1159px; flex: none; padding-top: 4px; display: flex; flex-direction: column; }
.wrow { display: flex; flex: none; }
.r2 { height: 25px; margin-left: 2px; }
.r3 { height: 25px; margin-top: 3px; margin-left: 2px; }
.r4 { height: 25px; margin-top: 3px; margin-left: 2px; }
.b-end { width: 31px; }
.combo { display: flex; align-items: center; height: 100%; margin-right: 3px; flex: none; background: #f7f7f7; }
.combo span { display: block; height: 100%; line-height: 25px; background: #fff; padding-left: 2px; white-space: nowrap; }
.combo .caret { margin: 0 auto; }
.c1 { width: 57px; } .c1 span { width: 46px; }
.c2 { width: 69px; } .c2 span { width: 53px; }
.c3 { width: 69px; } .c3 span { width: 55px; }
.c4 { width: 70px; margin-right: 0; } .c4 span { width: 55px; }
.c5 { width: 57px; margin-right: 0; } .c5 span { width: 45px; }
.select { width: 55px; height: 23px; margin: 0 2px; border: 1px solid #777; background: #f6f6f6; display: flex; align-items: center; justify-content: flex-end; padding-right: 4px; flex: none; }
.select .caret { border-top-color: #777; }
.canvas { width: 1159px; height: 507px; margin-top: 3px; flex: none; }
.axis-label text { fill: #c8c8c8; font: 700 12px "Liberation Sans", sans-serif; text-anchor: middle; }
.bottom { height: 31px; margin-left: 2px; padding: 2px 0 3px; }
.b-offset { width: 410px; }
.lbl { color: #8a8a8a; display: block; flex: none; font-size: 12.500px; white-space: nowrap; }
.x { width: 19px; margin-left: 3px; }
.mm1 { width: 27px; margin-left: 2px; }
.y { width: 18px; }
.mm2 { width: 21px; margin-left: 4px; }
.deg { margin-left: 3px; }
.spin { height: 24px; border: 1px solid #777; background: #f8f8f8; display: flex; align-items: center; justify-content: flex-end; flex: none; color: #7e95b8; font-size: 13px; }
.spin span { padding-right: 5px; }
.sp { width: 13px; height: 22px; background:
  linear-gradient(135deg, transparent 50%, #666 50%) 3px 5px / 3px 3px no-repeat,
  linear-gradient(225deg, transparent 50%, #666 50%) 6px 5px / 3px 3px no-repeat,
  linear-gradient(45deg, transparent 50%, #666 50%) 3px 14px / 3px 3px no-repeat,
  linear-gradient(315deg, transparent 50%, #666 50%) 6px 14px / 3px 3px no-repeat; }
.s1 { width: 57px; } .s2 { width: 55px; } .s3 { width: 68px; margin-left: 4px; }
.check { width: 12px; height: 12px; border: 1px solid #8a8a8a; background: #fafafa; margin-left: 4px; }
.rot-lbl { margin-left: 8px; white-space: nowrap; }

/* status */
.status { height: 22px; flex: none; display: flex; padding: 2px 0 1px 1px; font: 10px/17px "DejaVu Sans Mono", "Noto Sans CJK SC", monospace; }
.cell { height: 19px; background: #fbfbfb; border: 1px solid #dedede; padding-left: 1px; white-space: nowrap; overflow: hidden; flex: none; }
.st1 { width: 146px; } .st2 { width: 78px; margin-left: 4px; } .st3 { width: 98px; margin-left: 1px; }
.st4 { width: 48px; margin-left: 2px; } .st5 { width: 914px; margin-left: 2px; } .st6 { width: 70px; margin-left: 2px; }

/* taskbar */
.taskbar { height: 40px; flex: none; display: flex; align-items: stretch; background: #0b161d; color: #e8e8e8; }
.start { width: 48px; background: #000; display: flex; align-items: center; justify-content: center; flex: none; }
.start-logo { width: 16px; height: 17px; }
.search { width: 344px; background: #333; display: flex; align-items: center; flex: none; }
.cortana { width: 19px; height: 19px; margin-left: 11px; }
.search span { margin-left: 7px; font-size: 14px; color: #9a9a9a; white-space: nowrap; width: 279px; font-family: "Noto Sans CJK SC", sans-serif; }
.mic { width: 12px; height: 18px; margin-left: 0; }
.apps { display: flex; flex: none; width: 500px; }
.app { width: 50px; display: flex; align-items: center; justify-content: center; flex: none; }
.app.first-b { width: 49px; margin-left: 4px; }
.app.nar { width: 49px; }
.app.run { border-bottom: 2px solid #76b9ed; margin: 0 5px; width: 39px; padding-top: 2px; }
.a20 { width: 20px; height: 20px; } .a22 { width: 22px; height: 22px; } .a22.tall { height: 26px; } .a24 { width: 24px; height: 24px; }
.cpu { width: 60px; margin-left: 94px; display: flex; flex-direction: column; align-items: center; justify-content: center; line-height: 18px; flex: none; white-space: nowrap; }
.tray { display: flex; align-items: center; flex: none; position: relative; }
.t-up { width: 12px; height: 8px; margin-left: 14px; }
.t-bat { width: 16px; height: 10px; margin-left: 10px; }
.t-wifi { width: 14px; height: 14px; margin-left: 11px; }
.t-vol { width: 16px; height: 14px; margin-left: 7px; }
.t-kb { width: 22px; height: 13px; margin-left: 9px; }
.t-zh { width: 14px; margin-left: 10px; font-size: 13px; color: #fff; font-family: "Noto Sans CJK SC", sans-serif; font-weight: 700; }
.t-s { width: 16px; height: 16px; margin-left: 14px; }
.clock { width: 70px; margin-left: 11px; display: flex; flex-direction: column; align-items: center; line-height: 19px; white-space: nowrap; }
.notif { width: 40px; height: 40px; margin-left: 12px; background: #060a0d; position: relative; }
.n-ic { width: 16px; height: 14px; position: absolute; left: 16px; top: 12px; }
.n-count { position: absolute; left: 21px; top: 21px; width: 21px; height: 16px; border-radius: 8px; background: #333; border: 1px solid #777; color: #fff; font-size: 11px; line-height: 14px; font-weight: 700; text-align: center; }
```
